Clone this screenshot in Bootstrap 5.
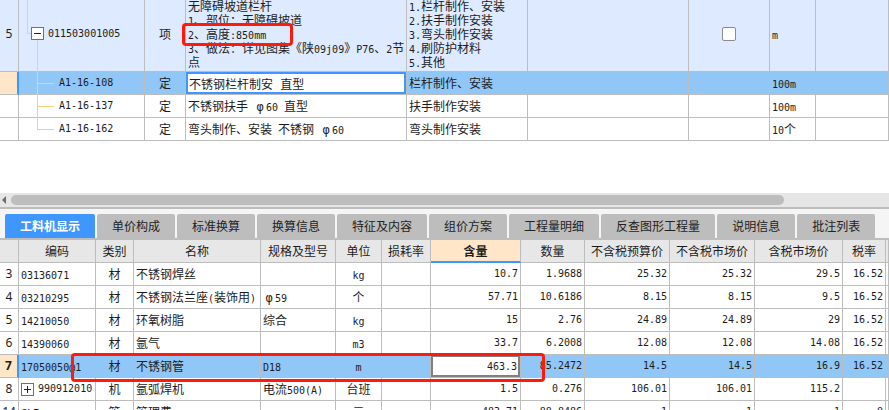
<!DOCTYPE html>
<html lang="zh-CN">
<head>
<meta charset="utf-8">
<meta name="viewport" content="width=device-width, initial-scale=1">
<title>工料机显示</title>
<link href="https://cdn.jsdelivr.net/npm/bootstrap@5.3.0/dist/css/bootstrap.min.css" rel="stylesheet">
<style>
  :root { --line:#bdbdbd; --blue:#4096ff; --pick:#91c7f7; --pale:#deeaff; --peach:#ffe6c8; --head:#e7e7e7; --red:#ff1a0d; }
  body { font-family:"Noto Sans CJK SC",sans-serif; font-size:12px; line-height:14px; color:#1c1c1c; }
  .en { font-family:"DejaVu Sans Mono",monospace; font-size:10px; line-height:8px; white-space:pre; }
  .phi { display:inline-block; width:12px; text-align:center; font-size:12px; line-height:8px; }
  .grid { table-layout:fixed; width:100%; border-collapse:separate; border-spacing:0; }
  .grid td, .grid th { height:23px; padding:0 2px; border-right:1px solid var(--line); border-bottom:1px solid var(--line); vertical-align:middle; white-space:nowrap; font-weight:400; line-height:14px; }
  .grid .num { font-family:"Noto Sans",sans-serif; font-size:12px; text-align:center; padding:0; }
  .grid .mid { text-align:center; }
  .grid .amt { text-align:right; font-family:"DejaVu Sans Mono",monospace; font-size:10px; }
  .upper { margin-top:-4px; }
  .upper .group td { height:76px; background:var(--pale); }
  .grid .picked td { background:var(--pick); }
  .grid .picked td.num { background:var(--peach); border-right:2px solid var(--blue); font-weight:700; }
  .grid td.editing { padding:0; background:#fff; }
  .cell-input { display:block; width:100%; height:22px; padding:0 1px; border:2px solid var(--blue); border-radius:0; background:#fff; outline:0; color:inherit; }
  .name-input { font-family:"DejaVu Sans Mono","Noto Sans CJK SC",monospace; font-size:12px; }
  .amt-input { font-family:"DejaVu Sans Mono",monospace; font-size:10px; border-color:#808080; text-align:right; }
  .grid td.tree { padding:0; }
  .tree > svg, .tree > div > svg { display:block; flex:none; overflow:visible; shape-rendering:crispEdges; stroke:#ffcb7d; fill:none; }
  .toggle { width:13px; height:13px; padding:0; border:1px solid #707070; background:#fff; border-radius:0; flex:none; }
  .toggle svg { display:block; stroke:#222; }
  .tick { width:14px; height:14px; margin:0; border:1px solid #8c8c8c; border-radius:2px; background:#fff; appearance:none; display:block; }
  .gap-area { height:52px; }
  .hscroll { height:14px; background:#e6e6e6; }
  .thumb { height:10px; width:87%; border-radius:5px; background:#bdbdbd; }
  .tabstrip { background:#f5f5f5; border-top:2px solid var(--line); padding:5px 5px 0; gap:2px; }
  .tabstrip .nav-link { height:24px; padding:0 15px; border:0; border-radius:2px 2px 0 0; background:#bdbdbd; color:#222; line-height:24px; font-size:12px; white-space:nowrap; }
  .tabstrip .nav-link.active { background:var(--blue); color:#fff; font-weight:700; }
  .lower { border-top:2px solid var(--line); }
  .lower th { background:var(--head); text-align:center; padding:0; }
  .lower th.hot { background:var(--peach); border-bottom:2px solid var(--blue); font-weight:700; }
  .outline { border:3px solid var(--red); border-radius:4px; pointer-events:none; z-index:2; }
  .outline-height { left:-4px; top:27px; width:111px; height:23px; }
  .outline-row { left:52px; top:-2px; width:474px; height:29px; }
</style>
<script src="https://cdn.jsdelivr.net/npm/bootstrap@5.3.0/dist/js/bootstrap.bundle.min.js"></script>
</head>
<body class="bg-white">
<main class="vh-100 overflow-hidden d-flex flex-column">
  <div class="flex-shrink-0">
  <table class="grid upper">
    <colgroup><col style="width:19px"><col style="width:126px"><col style="width:41px"><col style="width:221px"><col style="width:121px"><col style="width:161px"><col style="width:81px"><col style="width:46px"><col></colgroup>
    <tbody>
      <tr class="group">
        <td class="num">5</td>
        <td class="tree position-relative">
          <svg class="position-absolute top-0 start-0" width="30" height="75"><path d="M8.5 0V37.5H12M18.5 44V76"/></svg>
          <div class="d-flex align-items-center ps-2"><button class="toggle ms-1 position-relative" type="button" aria-label="折叠"><svg width="11" height="11"><path d="M2 5.5H9"/></svg></button><span class="en ms-1">011503001005</span></div>
        </td>
        <td class="mid">项</td>
        <td class="position-relative">无障碍坡道栏杆<br><span class="en">1</span>、部位：无障碍坡道<br><span class="en">2</span>、高度<span class="en">:850mm</span><br><span class="en">3</span>、做法：详见图集《陕<span class="en">09j09</span>》<span class="en">P76</span>、<span class="en">2</span>节<br>点<div class="outline outline-height position-absolute"></div></td>
        <td><span class="en">1.</span>栏杆制作、安装<br><span class="en">2.</span>扶手制作安装<br><span class="en">3.</span>弯头制作安装<br><span class="en">4.</span>刷防护材料<br><span class="en">5.</span>其他</td>
        <td></td>
        <td><input class="tick mx-auto" type="checkbox" aria-label="选择"></td>
        <td><span class="en">m</span></td><td></td>
      </tr>
      <tr class="picked">
        <td class="num"></td>
        <td class="tree"><div class="d-flex align-items-center"><svg width="40" height="22"><path d="M18.5 0V23M18.5 11.5H35"/></svg><span class="en">A1-16-108</span></div></td>
        <td class="mid">定</td>
        <td class="editing"><input class="cell-input name-input" type="text" aria-label="名称" value="不锈钢栏杆制安 直型"></td>
        <td>栏杆制作、安装</td><td></td><td></td><td><span class="en">100m</span></td><td></td>
      </tr>
      <tr>
        <td class="num"></td>
        <td class="tree"><div class="d-flex align-items-center"><svg width="40" height="22"><path d="M18.5 0V23M18.5 11.5H35"/></svg><span class="en">A1-16-137</span></div></td>
        <td class="mid">定</td>
        <td>不锈钢扶手<span class="en"> <span class="phi">φ</span>60 </span>直型</td>
        <td>扶手制作安装</td><td></td><td></td><td><span class="en">100m</span></td><td></td>
      </tr>
      <tr>
        <td class="num"></td>
        <td class="tree"><div class="d-flex align-items-center"><svg width="40" height="22"><path d="M18.5 0V11.5H35"/></svg><span class="en">A1-16-162</span></div></td>
        <td class="mid">定</td>
        <td>弯头制作、安装<span class="en"> </span>不锈钢<span class="en"> <span class="phi">φ</span>60</span></td>
        <td>弯头制作安装</td><td></td><td></td><td><span class="en">10</span>个</td><td></td>
      </tr>
    </tbody>
  </table>
  </div>

  <div class="gap-area flex-shrink-0"></div>
  <div class="hscroll d-flex align-items-center flex-shrink-0">
    <svg class="flex-shrink-0" width="11" height="10" fill="#666b78"><path d="M2 5L6 1V9Z"/></svg>
    <div class="thumb"></div>
  </div>

  <nav class="tabstrip nav flex-nowrap flex-shrink-0" aria-label="明细">
    <button class="nav-link active" type="button">工料机显示</button>
    <button class="nav-link" type="button">单价构成</button>
    <button class="nav-link" type="button">标准换算</button>
    <button class="nav-link" type="button">换算信息</button>
    <button class="nav-link" type="button">特征及内容</button>
    <button class="nav-link" type="button">组价方案</button>
    <button class="nav-link" type="button">工程量明细</button>
    <button class="nav-link" type="button">反查图形工程量</button>
    <button class="nav-link" type="button">说明信息</button>
    <button class="nav-link" type="button">批注列表</button>
  </nav>

  <div class="flex-shrink-0">
  <table class="grid lower">
    <colgroup><col style="width:19px"><col style="width:77px"><col style="width:38px"><col style="width:127px"><col style="width:75px"><col style="width:46px"><col style="width:49px"><col style="width:90px"><col style="width:64px"><col style="width:85px"><col style="width:85px"><col style="width:88px"><col style="width:43px"><col></colgroup>
    <thead>
      <tr><th></th><th>编码</th><th>类别</th><th>名称</th><th>规格及型号</th><th>单位</th><th>损耗率</th><th class="hot">含量</th><th>数量</th><th>不含税预算价</th><th>不含税市场价</th><th>含税市场价</th><th>税率</th><th></th></tr>
    </thead>
    <tbody>
      <tr><td class="num">3</td><td><span class="en">03136071</span></td><td class="mid">材</td><td>不锈钢焊丝</td><td></td><td class="mid"><span class="en">kg</span></td><td></td><td class="amt">10.7</td><td class="amt">1.9688</td><td class="amt">25.32</td><td class="amt">25.32</td><td class="amt">29.5</td><td class="amt">16.52</td><td></td></tr>
      <tr><td class="num">4</td><td><span class="en">03210295</span></td><td class="mid">材</td><td>不锈钢法兰座<span class="en">(</span>装饰用<span class="en">)</span></td><td><span class="en"><span class="phi">φ</span>59</span></td><td class="mid">个</td><td></td><td class="amt">57.71</td><td class="amt">10.6186</td><td class="amt">8.15</td><td class="amt">8.15</td><td class="amt">9.5</td><td class="amt">16.52</td><td></td></tr>
      <tr><td class="num">5</td><td><span class="en">14210050</span></td><td class="mid">材</td><td>环氧树脂</td><td>综合</td><td class="mid"><span class="en">kg</span></td><td></td><td class="amt">15</td><td class="amt">2.76</td><td class="amt">24.89</td><td class="amt">24.89</td><td class="amt">29</td><td class="amt">16.52</td><td></td></tr>
      <tr><td class="num">6</td><td><span class="en">14390060</span></td><td class="mid">材</td><td>氩气</td><td></td><td class="mid"><span class="en">m3</span></td><td></td><td class="amt">33.7</td><td class="amt">6.2008</td><td class="amt">12.08</td><td class="amt">12.08</td><td class="amt">14.08</td><td class="amt">16.52</td><td></td></tr>
      <tr class="picked"><td class="num">7</td><td class="position-relative"><span class="en">17050050@1</span><div class="outline outline-row position-absolute"></div></td><td class="mid">材</td><td>不锈钢管</td><td><span class="en">D18</span></td><td class="mid"><span class="en">m</span></td><td></td><td class="editing"><input class="cell-input amt-input" type="text" aria-label="含量" value="463.3"></td><td class="amt">85.2472</td><td class="amt">14.5</td><td class="amt">14.5</td><td class="amt">16.9</td><td class="amt">16.52</td><td></td></tr>
      <tr><td class="num">8</td><td><div class="d-flex align-items-center"><button class="toggle" type="button" aria-label="展开"><svg width="11" height="11"><path d="M2 5.5H9M5.5 2V9"/></svg></button><span class="en ms-1">990912010</span></div></td><td class="mid">机</td><td>氩弧焊机</td><td>电流<span class="en">500(A)</span></td><td class="mid">台班</td><td></td><td class="amt">1.5</td><td class="amt">0.276</td><td class="amt">106.01</td><td class="amt">106.01</td><td class="amt">115.2</td><td></td><td></td></tr>
      <tr><td class="num">14</td><td><span class="en">CLF</span></td><td class="mid">管</td><td>管理费</td><td></td><td class="mid">元</td><td></td><td class="amt">483.71</td><td class="amt">88.8486</td><td class="amt">1</td><td class="amt">1</td><td class="amt">1</td><td class="amt">0</td><td></td></tr>
    </tbody>
  </table>
  </div>
</main>
</body>
</html>
